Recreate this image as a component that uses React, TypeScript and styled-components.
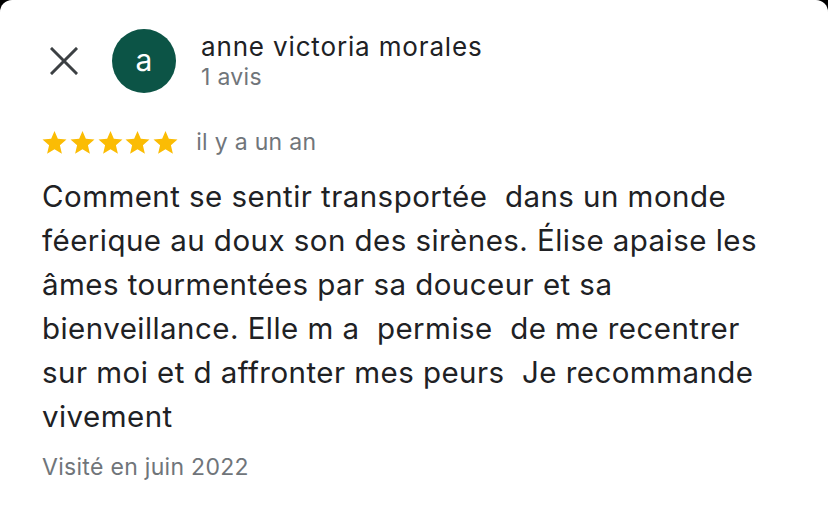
import React from "react";
import styled, { createGlobalStyle } from "styled-components";

const Global = createGlobalStyle`
  html, body { margin: 0; padding: 0; background: #000; }
  body { font-family: Inter, "Noto Sans", sans-serif; -webkit-font-smoothing: antialiased; }
`;

const Card = styled.div`
  width: 828px;
  height: 508px;
  background: #fff;
  border-radius: 12px 12px 0 0;
  box-sizing: border-box;
  padding: 29px 42px 0 42px;
  overflow: hidden;
`;

const Header = styled.div`
  display: flex;
  align-items: center;
`;

const CloseButton = styled.button`
  width: 44px;
  height: 44px;
  padding: 0;
  border: 0;
  background: transparent;
  display: flex;
  align-items: center;
  justify-content: center;
  color: #3c4043;
`;

const Avatar = styled.div`
  width: 64px;
  height: 64px;
  border-radius: 50%;
  background: #0c5446;
  color: #fff;
  display: flex;
  align-items: center;
  justify-content: center;
  font-size: 30px;
  line-height: 1;
  margin-left: 26px;
  padding-bottom: 3px;
  box-sizing: border-box;
`;

const Who = styled.div`
  display: flex;
  flex-direction: column;
  margin-left: 25px;
`;

const Name = styled.div`
  font-size: 26px;
  letter-spacing: 0.85px;
  color: #202124;
  line-height: 32px;
`;

const Sub = styled.div`
  font-size: 23px;
  letter-spacing: 0.3px;
  color: #70757a;
  line-height: 28px;
`;

const RatingRow = styled.div`
  display: flex;
  align-items: center;
  margin-top: 35px;
  gap: 18px;
`;

const Stars = styled.div`
  display: flex;
  gap: 2.8px;
`;

const Body = styled.p`
  margin: 18px 0 0 0;
  font-size: 29.5px;
  letter-spacing: 0.45px;
  line-height: 44px;
  color: #202124;
  white-space: pre-wrap;
`;

const Visited = styled(Sub)`
  margin-top: 15px;
`;

const Star = () => (
  <svg width="25" height="25" viewBox="0 0 24 24">
    <path
      fill="#fbbc04"
      d="M12 1l3.2 7.5 8.3.7-6.3 5.4 1.9 8.1L12 18.4l-7.1 4.3 1.9-8.1L.5 9.2l8.3-.7z"
    />
  </svg>
);

const lines = [
  "Comment se sentir transportée  dans un monde",
  "féerique au doux son des sirènes. Élise apaise les",
  "âmes tourmentées par sa douceur et sa",
  "bienveillance. Elle m a  permise  de me recentrer",
  "sur moi et d affronter mes peurs  Je recommande",
  "vivement",
];

export default function App() {
  return (
    <>
      <Global />
      <Card>
        <Header>
          <CloseButton aria-label="Fermer">
            <svg width="28" height="28" viewBox="0 0 28 28">
              <path d="M2 2L26 26M26 2L2 26" stroke="currentColor" strokeWidth="3" strokeLinecap="square" />
            </svg>
          </CloseButton>
          <Avatar>a</Avatar>
          <Who>
            <Name>anne victoria morales</Name>
            <Sub>1 avis</Sub>
          </Who>
        </Header>
        <RatingRow>
          <Stars>
            {[0, 1, 2, 3, 4].map((i) => (
              <Star key={i} />
            ))}
          </Stars>
          <Sub>il y a un an</Sub>
        </RatingRow>
        <Body>
          {lines.map((l, i) => (
            <React.Fragment key={i}>
              {l}
              {i < lines.length - 1 && <br />}
            </React.Fragment>
          ))}
        </Body>
        <Visited>Visité en juin 2022</Visited>
      </Card>
    </>
  );
}
